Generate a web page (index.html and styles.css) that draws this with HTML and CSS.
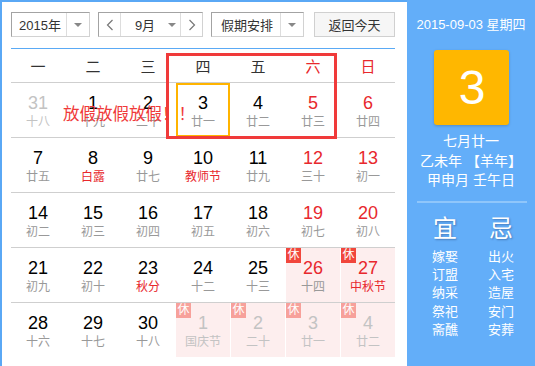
FILE: index.html
```html
<!DOCTYPE html>
<html lang="zh-CN">
<head>
    <meta charset="UTF-8">
    <meta name="viewport" content="width=device-width, initial-scale=1.0">
    <title>万年历</title>
    <link rel="stylesheet" href="styles.css">
</head>
<body>
    <div class="app">
        <div class="main">
            <div class="toolbar">
                <div class="select year">
                    <span class="select-text">2015年</span>
                    <span class="select-btn"><i class="caret"></i></span>
                </div>
                <div class="select month">
                    <span class="nav"><svg width="8" height="12" viewBox="0 0 8 12"><polyline points="6.5,1 1.5,6 6.5,11" fill="none" stroke="#777" stroke-width="1.2"/></svg></span>
                    <span class="select-text month-text">9月<i class="caret"></i></span>
                    <span class="nav nav-next"><svg width="8" height="12" viewBox="0 0 8 12"><polyline points="1.5,1 6.5,6 1.5,11" fill="none" stroke="#777" stroke-width="1.2"/></svg></span>
                </div>
                <div class="select plan">
                    <span class="select-text">假期安排</span>
                    <span class="select-btn"><i class="caret"></i></span>
                </div>
                <button class="today-btn">返回今天</button>
            </div>
            <div class="rule"></div>
            <div class="calendar" id="calendar">
                <div class="weekdays">
                    <span>一</span><span>二</span><span>三</span><span>四</span><span>五</span><span class="weekend">六</span><span class="weekend">日</span>
                </div>
                <div id="weeks"></div>
                <div class="focus-box"></div>
                <div class="notice">放假放假放假！！</div>
            </div>
        </div>
        <aside class="side">
            <div class="side-date">2015-09-03 星期四</div>
            <div class="big-day">3</div>
            <div class="lunar-info">
                <p>七月廿一</p>
                <p>乙未年 【羊年】</p>
                <p>甲申月 壬午日</p>
            </div>
            <div class="side-rule"></div>
            <div class="yiji">
                <div class="yiji-col">
                    <h3>宜</h3>
                    <p>嫁娶</p><p>订盟</p><p>纳采</p><p>祭祀</p><p>斋醮</p>
                </div>
                <div class="yiji-col">
                    <h3>忌</h3>
                    <p>出火</p><p>入宅</p><p>造屋</p><p>安门</p><p>安葬</p>
                </div>
            </div>
        </aside>
    </div>
    <script>
        // day, lunar text, flags: o = other month, r = red number, f = festival (red lunar), h = holiday, t = today
        const weeks = [
            [[31, "十八", "o"], [1, "十九"], [2, "二十"], [3, "廿一", "t"], [4, "廿二"], [5, "廿三", "r"], [6, "廿四", "r"]],
            [[7, "廿五"], [8, "白露", "f"], [9, "廿七"], [10, "教师节", "f"], [11, "廿九"], [12, "三十", "r"], [13, "初一", "r"]],
            [[14, "初二"], [15, "初三"], [16, "初四"], [17, "初五"], [18, "初六"], [19, "初七", "r"], [20, "初八", "r"]],
            [[21, "初九"], [22, "初十"], [23, "秋分", "f"], [24, "十二"], [25, "十三"], [26, "十四", "rh"], [27, "中秋节", "rhf"]],
            [[28, "十六"], [29, "十七"], [30, "十八"], [1, "国庆节", "oh"], [2, "二十", "oh"], [3, "廿一", "oh"], [4, "廿二", "oh"]]
        ];

        const weeksEl = document.getElementById("weeks");
        weeks.forEach(week => {
            const row = document.createElement("div");
            row.className = "week";
            week.forEach(([day, lunar, flags = ""]) => {
                const cell = document.createElement("div");
                cell.className = "day";
                if (flags.includes("o")) cell.classList.add("other");
                if (flags.includes("r")) cell.classList.add("red");
                if (flags.includes("f")) cell.classList.add("festival");
                if (flags.includes("h")) cell.classList.add("off-day");
                if (flags.includes("t")) cell.classList.add("today");
                cell.innerHTML = (flags.includes("h") ? '<span class="rest">休</span>' : '') +
                    `<span class="num">${day}</span><span class="lunar">${lunar}</span>`;
                row.appendChild(cell);
            });
            weeksEl.appendChild(row);
        });
    </script>
</body>
</html>
```

FILE: styles.css
```css
* {
    box-sizing: border-box;
}
body {
    margin: 0;
    font-family: "Liberation Sans", "Noto Sans CJK SC", sans-serif;
    background: #fff;
}
.app {
    display: flex;
    width: 535px;
    height: 366px;
    border-left: 2px solid #5aa8f5;
    overflow: hidden;
}
.main {
    width: 405px;
    border-top: 2px solid #5aa8f5;
    padding: 10px 0 0 9px;
}
.toolbar {
    display: flex;
    height: 25px;
}
.select {
    display: flex;
    height: 25px;
    border: 1px solid;
    border-color: #a3a3a3 #d2d2d2 #d2d2d2 #a3a3a3;
    background: #fff;
    font-size: 13px;
    color: #333;
}
.select-text {
    display: flex;
    align-items: center;
    justify-content: center;
}
.select-btn {
    display: flex;
    align-items: center;
    justify-content: center;
    border-left: 1px solid #ddd;
}
.caret {
    width: 0;
    height: 0;
    border-left: 4px solid transparent;
    border-right: 4px solid transparent;
    border-top: 4px solid #888;
}
.year {
    width: 79px;
}
.year .select-text {
    width: 54px;
    padding-left: 2px;
}
.year .select-btn {
    width: 23px;
}
.month {
    width: 105px;
    margin-left: 8px;
}
.nav {
    width: 22px;
    display: flex;
    align-items: center;
    justify-content: center;
    border-right: 1px solid #ddd;
}
.nav-next {
    border-right: none;
    border-left: 1px solid #ddd;
    width: 22px;
}
.month-text {
    width: 59px;
    gap: 13px;
    padding-left: 10px;
}
.plan {
    width: 93px;
    margin-left: 8px;
}
.plan .select-text {
    width: 68px;
    padding-left: 2px;
}
.plan .select-btn {
    width: 23px;
}
.today-btn {
    width: 81px;
    height: 25px;
    margin-left: 10px;
    border: 1px solid #d0d0d0;
    background: #f6f6f6;
    font-family: inherit;
    font-size: 13px;
    color: #333;
    padding: 0;
}
.rule {
    width: 384px;
    height: 1px;
    margin-top: 11px;
    background: #5aaaf5;
}
.calendar {
    position: relative;
    width: 384px;
}
.weekdays {
    display: grid;
    grid-template-columns: repeat(7, 54px);
    column-gap: 1px;
    height: 33px;
    align-items: center;
    font-size: 15px;
    color: #333;
    text-align: center;
}
.weekend {
    color: #e8282d;
}
.week {
    display: grid;
    grid-template-columns: repeat(7, 54px);
    column-gap: 1px;
    border-top: 1px solid #cfcfcf;
    height: 55px;
}
.day {
    position: relative;
    display: flex;
    flex-direction: column;
    align-items: center;
    padding-top: 10px;
    height: 54px;
}
.num {
    font-size: 18px;
    line-height: 20px;
    color: #000;
}
.lunar {
    font-size: 12px;
    line-height: 18px;
    color: #999;
}
.red .num {
    color: #e8282d;
}
.festival .lunar {
    color: #e8282d;
}
.other .num {
    color: #c3c3c3;
}
.other .lunar {
    color: #c3c3c3;
}
.off-day {
    background: #fdeeee;
}
.rest {
    position: absolute;
    top: 0;
    left: 0;
    width: 15px;
    height: 15px;
    background: #f1463c;
    color: #fff;
    font-size: 12px;
    line-height: 15px;
    text-align: center;
}
.other .rest {
    background: #f7a19b;
}
.today {
    border: 2px solid #ffb400;
    padding-top: 8px;
    background: #fff;
}
.focus-box {
    position: absolute;
    left: 155px;
    top: 4px;
    width: 171px;
    height: 86px;
    border: 3px solid #f03a3a;
}
.notice {
    position: absolute;
    left: 52px;
    top: 55px;
    font-size: 16.5px;
    line-height: 20px;
    color: #f03a3a;
    white-space: nowrap;
}
.side {
    flex: 1;
    background: #63aef9;
    color: #fff;
    text-align: center;
}
.side-date {
    margin-top: 16px;
    font-size: 13px;
    line-height: 18px;
}
.big-day {
    width: 75px;
    height: 75px;
    margin: 16px auto 0;
    padding-left: 2px;
    background: #ffb700;
    border-radius: 3px;
    box-shadow: 0 1px 3px rgba(0, 0, 0, 0.2);
    font-size: 48px;
    line-height: 75px;
}
.lunar-info {
    margin-top: 7px;
}
.lunar-info p {
    margin: 0;
    font-size: 14px;
    line-height: 19.5px;
}
.side-rule {
    width: 110px;
    height: 2px;
    margin: 10px 0 0 10px;
    background: #8fc6fb;
}
.yiji {
    display: grid;
    grid-template-columns: 56px 56px;
    padding-left: 10px;
    margin-top: 12px;
}
.yiji h3 {
    margin: 0 0 5px;
    font-size: 24px;
    line-height: 28px;
    font-weight: normal;
    text-shadow: 1px 1px 2px rgba(0, 0, 40, 0.3);
}
.yiji p {
    margin: 0;
    font-size: 13px;
    line-height: 18.4px;
}
```
